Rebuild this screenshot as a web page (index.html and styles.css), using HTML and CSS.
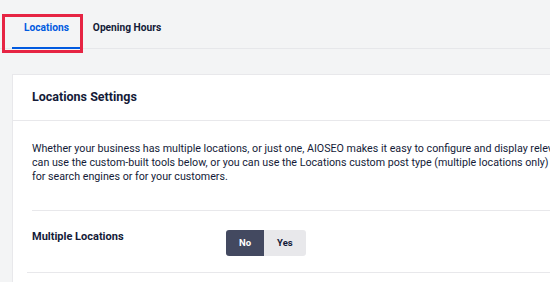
FILE: index.html
```html
<!DOCTYPE html>
<html lang="en">
<head>
    <meta charset="UTF-8">
    <meta name="viewport" content="width=device-width, initial-scale=1.0">
    <title>Local Business - Locations</title>

    <link rel="stylesheet" href="styles.css">
</head>
<body>
    <div id="page">
        <div id="tabs">
            <div class="tab active">
                <span>Locations</span>
                <div class="highlight"></div>
            </div>
            <div class="tab">Opening Hours</div>
        </div>

        <div class="card">
            <div class="cardHead">
                <h2>Locations Settings</h2>
            </div>

            <p class="desc">
                Whether your business has multiple locations, or just one, AIOSEO makes it easy to configure and display relevant contact info, opening hours, and more. You<br>
                can use the custom-built tools below, or you can use the Locations custom post type (multiple locations only) to display this info in your Knowledge Panel<br>
                for search engines or for your customers.
            </p>

            <div class="row">
                <div class="label">Multiple Locations</div>
                <div class="toggle">
                    <div class="opt on">No</div>
                    <div class="opt">Yes</div>
                </div>
            </div>

            <div class="row next">
                <div class="label">&nbsp;</div>
            </div>
        </div>
    </div>
</body>
</html>
```

FILE: styles.css
```css
*{
    margin: 0;
    padding: 0;
    box-sizing: border-box;
    font-family: Roboto, 'Liberation Sans', sans-serif;
}

body{
    background: #f3f4f5;
    color: #141b38;
    overflow: hidden;
}

#page{
    width: 760px;
}

/* tabs */
#tabs{
    display: flex;
    height: 49px;
    padding-left: 12px;
    border-bottom: 1px solid #e6e7ea;
}
#tabs .tab{
    position: relative;
    height: 49px;
    padding: 21px 12px 0;
    font-size: 10.2px;
    line-height: 14px;
    font-weight: 700;
    color: #141b38;
    border-bottom: 2px solid transparent;
}
#tabs .tab.active{
    color: #005ae0;
    border-bottom-color: #005ae0;
}
#tabs .tab .highlight{
    position: absolute;
    left: -10px;
    top: 14px;
    width: 81px;
    height: 39px;
    border: 3px solid #e62443;
}

/* card */
.card{
    margin: 25px 0 0 12px;
    background: #fff;
    border: 1px solid #e8e8eb;
}
.cardHead{
    padding: 14px 19px 15px;
    border-bottom: 1px solid #e8e8eb;
}
.cardHead h2{
    font-size: 12.5px;
    line-height: 16px;
    font-weight: 700;
}

.desc{
    padding: 21px 19px 26px;
    font-size: 10.7px;
    line-height: 14px;
    white-space: nowrap;
}

.row{
    display: flex;
    margin-left: 19px;
    padding: 19px 0 16px;
    border-top: 1px solid #e8e8eb;
}
.row.next{
    margin-left: 14px;
}
.row .label{
    width: 194px;
    flex-shrink: 0;
    font-size: 11px;
    line-height: 14px;
    font-weight: 700;
}

.toggle{
    display: flex;
}
.toggle .opt{
    height: 26px;
    padding: 0 13px;
    font-size: 9.5px;
    line-height: 26px;
    font-weight: 700;
    background: #e8e8eb;
    color: #141b38;
}
.toggle .opt:first-child{
    border-radius: 3px 0 0 3px;
}
.toggle .opt:last-child{
    border-radius: 0 3px 3px 0;
}
.toggle .opt.on{
    background: #434960;
    color: #fff;
}
```
